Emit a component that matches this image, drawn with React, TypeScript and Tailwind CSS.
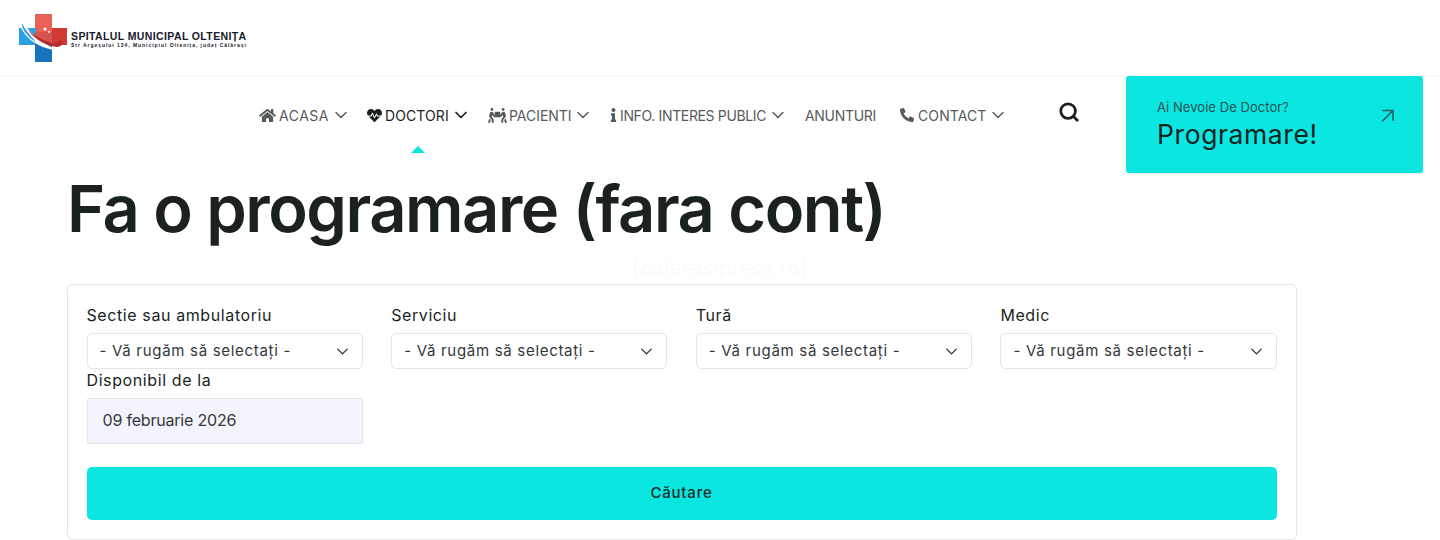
import { ChevronDown, Search } from "lucide-react";
import type { ReactNode } from "react";
import { FaHeartbeat, FaHome, FaInfo, FaPeopleCarry, FaPhoneAlt } from "react-icons/fa";

const sans = "font-['Inter','Noto_Sans',sans-serif]";

const navItems: { label: string; icon?: ReactNode; caret: boolean; active?: boolean; width: string; tracking: string; gap: string }[] = [
  { label: "ACASA", icon: <FaHome className="w-[17px] h-[15px]" />, caret: true, width: "w-[107px]", tracking: "tracking-[0.5px]", gap: "mr-[3px]" },
  { label: "DOCTORI", icon: <FaHeartbeat className="w-[17px] h-[15px]" />, caret: true, active: true, width: "w-[122px]", tracking: "tracking-[0.1px]", gap: "mr-[2px]" },
  { label: "PACIENTI", icon: <FaPeopleCarry className="w-[19px] h-[15px]" />, caret: true, width: "w-[122px]", tracking: "tracking-[-0.05px]", gap: "mr-[2px]" },
  { label: "INFO. INTERES PUBLIC", icon: <FaInfo className="w-[7px] h-[14px]" />, caret: true, width: "w-[195px]", tracking: "tracking-[-0.35px]", gap: "mr-[3px]" },
  { label: "ANUNTURI", caret: false, width: "w-[95px]", tracking: "tracking-[-0.3px]", gap: "" },
  { label: "CONTACT", icon: <FaPhoneAlt className="w-[14px] h-[14px]" />, caret: true, width: "w-[120px]", tracking: "tracking-[0.1px]", gap: "mr-[4px]" },
];

function Logo() {
  return (
    <div className="flex items-center pl-[19px] pt-[14px]">
      <svg width="49" height="49" viewBox="0 0 49 49" className="shrink-0">
        <rect x="16" y="0" width="17" height="20" fill="#e9625a" />
        <rect x="33" y="14" width="15" height="17" fill="#cf3a32" />
        <rect x="0" y="14" width="17" height="17" fill="#2f9fe4" />
        <rect x="16" y="28" width="17" height="20" fill="#1673bd" />
        <rect x="16" y="18" width="17" height="12" fill="#d5534c" />
        <path d="M1 8C1 20 18 35 38 36C28 31 12 22 4 8Z" fill="#fff" />
        <path d="M3 9C2 14 8 23 17 28C9 19 5 14 3 9Z" fill="#2f9fe4" />
        <path d="M9 16C15 25 27 32 38 33C43 33 45 29 41 25C41 29 34 30 27 27C19 24 13 20 9 16Z" fill="#b92b2a" />
        <circle cx="26" cy="15" r="1.5" fill="#fff" />
        <circle cx="30" cy="18" r="1" fill="#fff" />
      </svg>
      <div className="ml-[3px] mt-[1px] font-['Liberation_Sans',sans-serif] text-[#16202c]">
        <div className="text-[10.5px] leading-[12px] font-bold tracking-[0.38px] whitespace-nowrap">SPITALUL MUNICIPAL OLTENIȚA</div>
        <div className="text-[5px] leading-[7px] font-bold tracking-[0.96px] whitespace-nowrap">Str Argeșului 134, Municipiul Oltenița, județ Călărași</div>
      </div>
    </div>
  );
}

function Nav() {
  return (
    <nav className="flex items-start pl-[259px] pt-[28px]">
      {navItems.map((item) => (
        <div key={item.label} className={`${item.width} ${item.tracking} shrink-0 relative flex items-center h-[22px] text-[14px] whitespace-nowrap ${item.active ? "text-[#1a1f1f]" : "text-[#555a5a]"}`}>
          {item.icon && <span className={`${item.gap} flex items-center`}>{item.icon}</span>}
          <span>{item.label}</span>
          {item.caret && <ChevronDown className="ml-[2px] w-[20px] h-[20px]" strokeWidth={item.active ? 2.1 : 1.7} />}
          {item.active && <span className="absolute left-[45px] top-[42px] w-0 h-0 border-x-[7px] border-x-transparent border-b-[7px] border-b-[#0ee6e0]" />}
        </div>
      ))}
      <Search className="ml-[38px] -mt-[3px] w-[22px] h-[22px] text-[#1a1f1f]" strokeWidth={3} />
    </nav>
  );
}

function SelectField({ label }: { label: string }) {
  return (
    <div className="min-w-0">
      <div className="text-[16px] leading-[24px] font-normal text-[#1a1f1f] tracking-[0.6px]">{label}</div>
      <div className="mt-[6px] h-[36px] rounded-[5px] border border-[#e3e5e8] bg-white pl-[12px] pr-[10px] flex items-center justify-between text-[15px] text-[#33383a] tracking-[0.7px]">
        <span>- Vă rugăm să selectați -</span>
        <ChevronDown className="w-[19px] h-[19px] text-[#333]" strokeWidth={1.7} />
      </div>
    </div>
  );
}

export default function App() {
  return (
    <div className={`h-[540px] overflow-hidden bg-white ${sans}`}>
      <header className="h-[77px] border-b-2 border-[#f6f7f7]">
        <Logo />
      </header>
      <div className="flex h-[96px] items-start -mt-[1px]">
        <Nav />
        <a className="ml-auto mr-[17px] w-[297px] h-[97px] rounded-[3px] bg-[#0ce6e1] pl-[31px] pr-[29px] pt-[23px] flex justify-between shadow-[0_1px_2px_rgba(0,0,0,0.1)]">
          <div>
            <div className="text-[13px] leading-[17px] text-[#255053] tracking-[0.05px]">Ai Nevoie De Doctor?</div>
            <div className="text-[26.5px] leading-[34px] mt-[1px] text-[#14231f] tracking-[0.6px]">Programare!</div>
          </div>
          <svg width="13" height="13" viewBox="0 0 13 13" fill="none" stroke="#1e5c5f" strokeWidth="1.5" className="mt-[10px]">
            <path d="M1.5 1.5H12V12M12 1.5L1 12.5" />
          </svg>
        </a>
      </div>
      <h1 className="pl-[67px] text-[65px] leading-[74px] font-semibold text-[#1b2020] tracking-[-1.48px] whitespace-nowrap">Fa o programare (fara cont)</h1>
      <div className="flex justify-center h-[22px] mt-[11px] text-[20px] leading-[22px] font-light text-[#f7f7f7] tracking-[0.1px] font-['DejaVu_Sans',sans-serif]">[calarasipress.ro]</div>
      <section className="ml-[67px] mt-[5px] w-[1230px] h-[256px] rounded-[5px] border border-[#e6e7e9] bg-white pl-[18.5px] pr-[19.5px] pt-[18px]">
        <div className="grid grid-cols-4 gap-x-[28.5px]">
          <SelectField label="Sectie sau ambulatoriu" />
          <SelectField label="Serviciu" />
          <SelectField label="Tură" />
          <SelectField label="Medic" />
          <div>
            <div className="text-[16px] leading-[22px] font-normal text-[#1a1f1f] tracking-[0.6px]">Disponibil de la</div>
            <div className="mt-[7px] h-[46px] rounded-[2px] border border-[#e3e5e8] bg-[#f4f5fc] pl-[15px] pb-[2px] flex items-center text-[16px] text-[#33383a] tracking-[-0.2px]">09 februarie 2026</div>
          </div>
        </div>
        <button className="mt-[23px] w-full h-[53px] rounded-[5px] bg-[#0ce6e1] text-[15px] font-medium text-[#1c2a2a] tracking-[0.8px]">Căutare</button>
      </section>
    </div>
  );
}
